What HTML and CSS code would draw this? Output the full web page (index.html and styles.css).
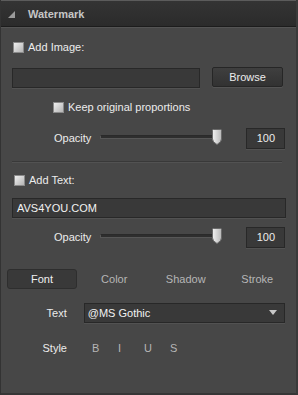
FILE: index.html
```html
<!DOCTYPE html>
<html lang="en">
<head>
  <meta charset="UTF-8">
  <title>Watermark</title>
  <link rel="stylesheet" href="styles.css">
</head>
<body>
  <div class="panel">
    <div class="header">
      <span class="corner"></span>
      <span class="title">Watermark</span>
    </div>

    <div class="content">
      <label class="check-row add-image">
        <span class="box"></span>Add Image:
      </label>

      <div class="browse-row">
        <div class="field path"></div>
        <button class="btn">Browse</button>
      </div>

      <label class="check-row keep">
        <span class="box"></span>Keep original proportions
      </label>

      <div class="opacity-row first">
        <span class="lbl">Opacity</span>
        <div class="slider">
          <div class="track"></div>
          <svg class="thumb" width="10" height="16" viewBox="0 0 10 16">
            <defs>
              <linearGradient id="tg" x1="0" y1="0" x2="1" y2="0">
                <stop offset="0" stop-color="#f2f2f2"/>
                <stop offset="1" stop-color="#b8b8b8"/>
              </linearGradient>
            </defs>
            <path d="M1.5 0.5 H8.5 Q9.5 0.5 9.5 1.5 V10 Q9.5 13 5 15.5 Q0.5 13 0.5 10 V1.5 Q0.5 0.5 1.5 0.5 Z" fill="url(#tg)" stroke="#6a6a6a"/>
          </svg>
        </div>
        <div class="value">100</div>
      </div>

      <div class="separator"></div>

      <label class="check-row add-text">
        <span class="box"></span>Add Text:
      </label>

      <div class="field text-input">AVS4YOU.COM</div>

      <div class="opacity-row second">
        <span class="lbl">Opacity</span>
        <div class="slider">
          <div class="track"></div>
          <svg class="thumb" width="10" height="16" viewBox="0 0 10 16">
            <path d="M1.5 0.5 H8.5 Q9.5 0.5 9.5 1.5 V10 Q9.5 13 5 15.5 Q0.5 13 0.5 10 V1.5 Q0.5 0.5 1.5 0.5 Z" fill="url(#tg)" stroke="#6a6a6a"/>
          </svg>
        </div>
        <div class="value">100</div>
      </div>

      <div class="tabs">
        <span class="tab active">Font</span>
        <span class="tab">Color</span>
        <span class="tab">Shadow</span>
        <span class="tab">Stroke</span>
      </div>

      <div class="font-row">
        <span class="side-lbl">Text</span>
        <div class="select">
          <span>@MS Gothic</span>
          <span class="arrow"></span>
        </div>
      </div>

      <div class="style-row">
        <span class="side-lbl">Style</span>
        <span class="st b">B</span>
        <span class="st i">I</span>
        <span class="st u">U</span>
        <span class="st s">S</span>
      </div>
    </div>
  </div>
</body>
</html>
```

FILE: styles.css
```css
/* Base */
body {
  margin: 0;
  background: #474747;
  font-family: 'Liberation Sans', Arial, sans-serif;
  font-size: 11px;
  color: #ececec;
}

.panel {
  width: 298px;
  height: 395px;
  box-sizing: border-box;
  background: #474747;
  border-left: 1px solid #333;
  border-right: 2px solid #3a3a3a;
  border-bottom: 2px solid #363636;
}

/* Header */
.header {
  height: 25px;
  display: flex;
  align-items: center;
  background: linear-gradient(#343434, #2b2b2b);
  border-top: 1px solid #5c5c5c;
  border-bottom: 1px solid #1c1c1c;
  box-shadow: 0 1px 0 #545454;
}

.corner {
  width: 0;
  height: 0;
  margin-left: 7px;
  margin-top: 2px;
  border-left: 7px solid transparent;
  border-bottom: 7px solid #9a9a9a;
}

.title {
  margin-left: 13px;
  font-family: 'Liberation Sans', sans-serif;
  font-size: 11px;
  font-weight: bold;
  color: #c6c6c6;
}

.content {
  padding: 0 11px 0 11px;
}

/* Checkboxes */
.check-row {
  display: flex;
  align-items: center;
  height: 20px;
}

.box {
  width: 9px;
  height: 9px;
  margin-right: 4px;
  border: 1px solid #8a8a8a;
  background: linear-gradient(135deg, #f0f0f0, #b4b4b4);
}

.add-image { margin-top: 10px; padding-left: 1px; }
.keep { margin-top: 9px; padding-left: 41px; }
.add-text { margin-top: 8px; padding-left: 2px; }

/* Fields */
.field {
  box-sizing: border-box;
  height: 20px;
  background: #393939;
  border: 1px solid #282828;
  box-shadow: 0 1px 0 #525252;
}

.browse-row {
  display: flex;
  align-items: flex-start;
  margin-top: 10px;
  height: 21px;
}

.path {
  width: 188px;
  margin-top: 1px;
}

.btn {
  width: 71px;
  height: 20px;
  margin-left: 12px;
  padding: 0;
  background: linear-gradient(#3f3f3f, #323232);
  border: 1px solid #262626;
  border-radius: 2px;
  box-shadow: 0 1px 0 #545454;
  color: #ececec;
  font-family: inherit;
  font-size: 11px;
}

.text-input {
  width: 274px;
  margin-top: 8px;
  padding-left: 4px;
  line-height: 18px;
  color: #f2f2f2;
}

/* Opacity slider */
.opacity-row {
  display: flex;
  align-items: center;
  height: 20px;
  padding-left: 42px;
}

.opacity-row.first { margin-top: 11px; }
.opacity-row.second { margin-top: 9px; }

.lbl {
  width: 46px;
}

.slider {
  position: relative;
  width: 121px;
  height: 16px;
}

.track {
  position: absolute;
  left: 0;
  right: 0;
  top: 5px;
  height: 2px;
  background: #2e2e2e;
  border: 1px solid #575757;
  border-top-color: #2a2a2a;
}

.thumb {
  position: absolute;
  left: 112px;
  top: -1px;
}

.value {
  box-sizing: border-box;
  width: 39px;
  height: 21px;
  margin-left: 27px;
  padding-right: 9px;
  line-height: 19px;
  text-align: right;
  background: #393939;
  border: 1px solid #282828;
  box-shadow: 0 1px 0 #525252;
}

.separator {
  width: 270px;
  margin-top: 13px;
  height: 1px;
  background: #393939;
  box-shadow: 0 1px 0 #525252;
}

/* Tabs */
.tabs {
  display: grid;
  grid-template-columns: repeat(4, 71.5px);
  margin: 22px 0 0 -5px;
  height: 20px;
}

.tab {
  display: flex;
  align-items: center;
  justify-content: center;
  color: #b6b6b6;
}

.tab.active {
  width: 70px;
  box-sizing: border-box;
  background: #393939;
  border: 1px solid #2e2e2e;
  border-radius: 3px;
  color: #f0f0f0;
}

/* Font rows */
.font-row {
  display: flex;
  align-items: center;
  margin-top: 14px;
  height: 19px;
}

.side-lbl {
  width: 55px;
  text-align: right;
}

.select {
  box-sizing: border-box;
  display: flex;
  align-items: center;
  justify-content: space-between;
  width: 202px;
  height: 20px;
  margin-left: 17px;
  padding: 0 7px 0 3px;
  background: #393939;
  border: 1px solid #282828;
  box-shadow: 0 1px 0 #525252;
  color: #f2f2f2;
}

.arrow {
  width: 0;
  height: 0;
  border-left: 4px solid transparent;
  border-right: 4px solid transparent;
  border-top: 5px solid #c8c8c8;
}

.style-row {
  display: flex;
  align-items: center;
  margin-top: 16px;
  height: 20px;
}

.st {
  color: #b6b6b6;
  width: 26px;
}

.st.b { margin-left: 25px; }
```
